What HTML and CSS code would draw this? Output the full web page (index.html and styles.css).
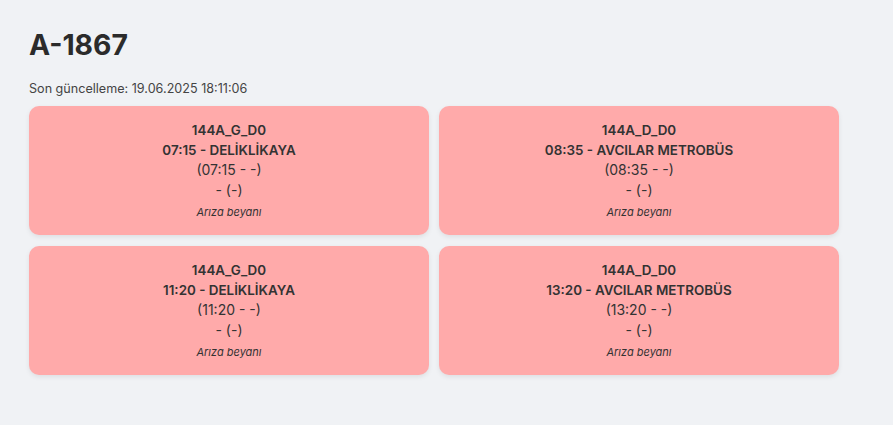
FILE: index.html
```html
<!DOCTYPE html>
<html lang="tr">
<head>
<meta charset="utf-8">
<link rel="stylesheet" href="styles.css">
</head>
<body>
<div class="page">
  <h1 class="title">A-1867</h1>
  <div class="updated">Son güncelleme: 19.06.2025 18:11:06</div>
  <div class="grid">
    <div class="card">
      <div class="line bold">144A_G_D0</div>
      <div class="line bold">07:15 - DELİKLİKAYA</div>
      <div class="line">(07:15 - -)</div>
      <div class="line">- (-)</div>
      <div class="note">Arıza beyanı</div>
    </div>
    <div class="card">
      <div class="line bold">144A_D_D0</div>
      <div class="line bold">08:35 - AVCILAR METROBÜS</div>
      <div class="line">(08:35 - -)</div>
      <div class="line">- (-)</div>
      <div class="note">Arıza beyanı</div>
    </div>
    <div class="card">
      <div class="line bold">144A_G_D0</div>
      <div class="line bold">11:20 - DELİKLİKAYA</div>
      <div class="line">(11:20 - -)</div>
      <div class="line">- (-)</div>
      <div class="note">Arıza beyanı</div>
    </div>
    <div class="card">
      <div class="line bold">144A_D_D0</div>
      <div class="line bold">13:20 - AVCILAR METROBÜS</div>
      <div class="line">(13:20 - -)</div>
      <div class="line">- (-)</div>
      <div class="note">Arıza beyanı</div>
    </div>
  </div>
</div>
</body>
</html>
```
FILE: styles.css
```css
html, body {
  margin: 0;
  padding: 0;
  background: #f0f2f5;
  font-family: Inter, "Noto Sans", sans-serif;
  color: #333;
}
.page {
  padding: 22px 29px;
}
.title {
  margin: 0;
  font-size: 28.3px;
  font-weight: 700;
  line-height: 46px;
  color: #2b2b2b;
}
.updated {
  margin-top: 12px;
  font-size: 12.6px;
  line-height: 18px;
  color: #444;
}
.grid {
  margin-top: 8px;
  display: grid;
  grid-template-columns: 400px 400px;
  column-gap: 10px;
  row-gap: 11px;
}
.card {
  background: #ffaaaa;
  border-radius: 10px;
  box-shadow: 0 2px 5px rgba(0,0,0,0.08);
  padding: 14px 10px 15px;
  text-align: center;
  height: 129px;
  box-sizing: border-box;
}
.line {
  font-size: 14px;
  line-height: 20px;
  color: #333;
}
.bold {
  font-size: 13.4px;
  font-weight: 600;
}
.note {
  margin-top: 4px;
  font-size: 11px;
  line-height: 16px;
  font-style: italic;
  color: #333;
}
```
